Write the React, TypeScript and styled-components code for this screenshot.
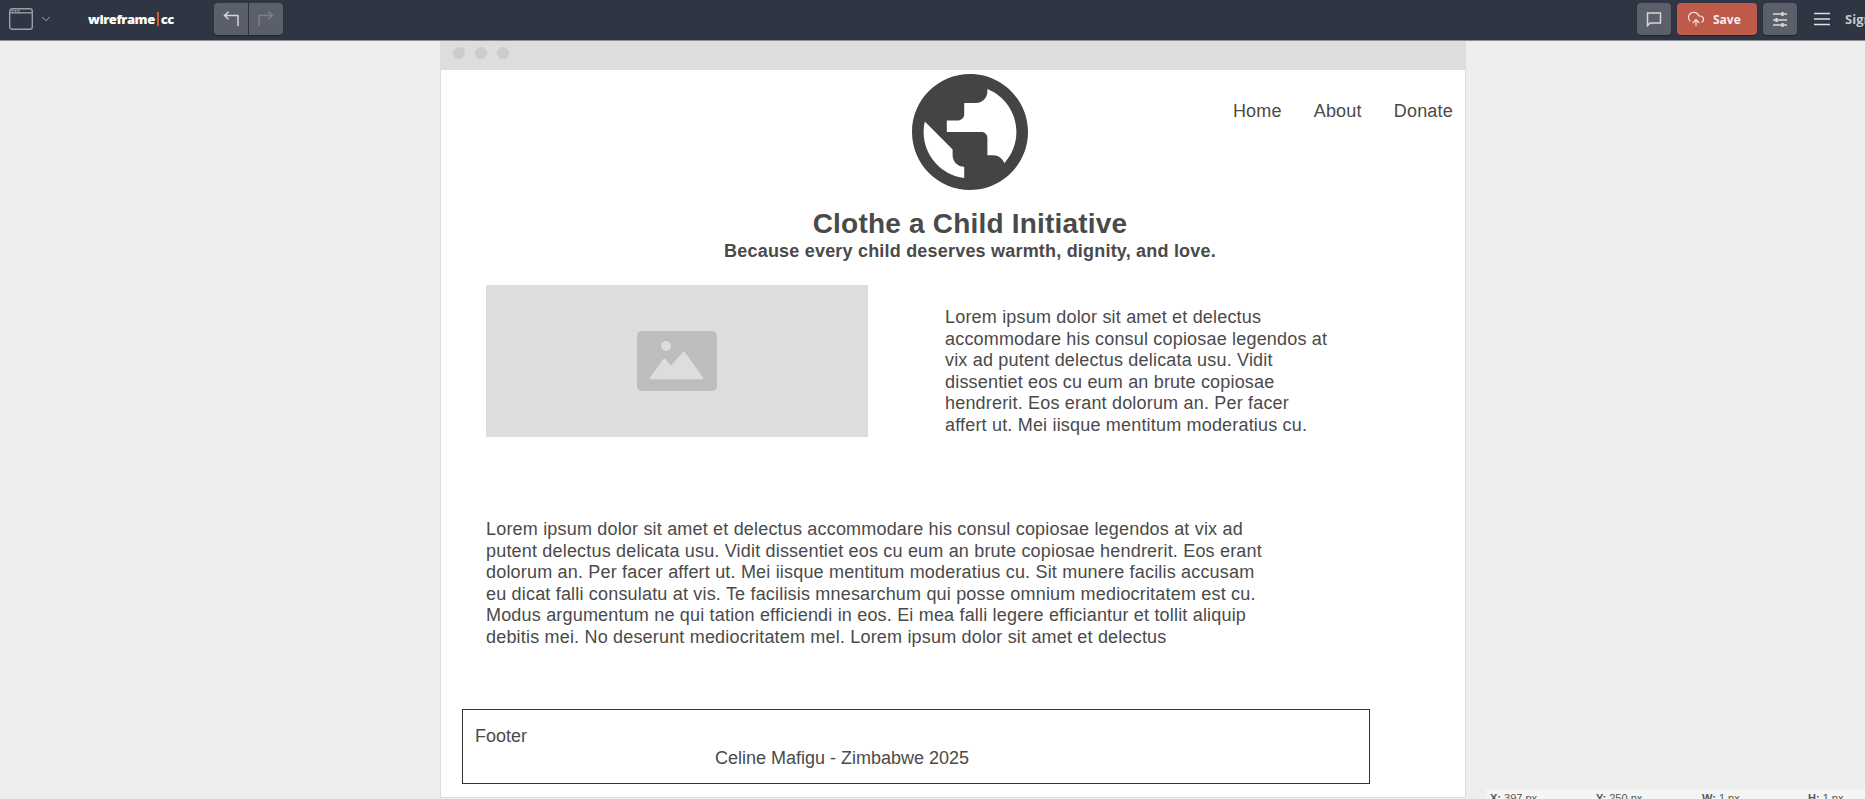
import { createGlobalStyle } from "styled-components";
import styled from "styled-components";
import { ChevronDown, CloudUpload } from "lucide-react";

const Global = createGlobalStyle`
  html, body {
    margin: 0;
    padding: 0;
    height: 100%;
    overflow: hidden;
  }
  #root {
    height: 100%;
  }
`;

const Page = styled.div`
  position: relative;
  height: 799px;
  overflow: hidden;
  background: #eeeeee;
  font-family: "Liberation Sans", Arial, sans-serif;
  color: #4a4a4a;
`;

const Toolbar = styled.div`
  display: flex;
  align-items: center;
  height: 38px;
  padding: 0 0 2px 9px;
  background: #2f3542;
  border-bottom: 1px solid #8a8d93;
`;

const WindowIcon = styled.svg`
  width: 24px;
  height: 22px;
  flex: none;
`;

const Chevron = styled(ChevronDown)`
  margin-left: 6px;
  color: #b5b9bf;
  flex: none;
`;

const Brand = styled.div`
  margin-left: 35px;
  width: 126px;
  font-family: "Open Sans", "Noto Sans", sans-serif;
  font-size: 13px;
  font-weight: 800;
  color: #ffffff;
  letter-spacing: -0.45px;

  i {
    display: inline-block;
    width: 2px;
    height: 14px;
    margin: 0 2px;
    background: #d0583f;
    vertical-align: -2px;
  }
`;

const ButtonGroup = styled.div`
  display: flex;
  gap: 1px;
`;

const ToolButton = styled.div<{ $side?: "left" | "right"; $dim?: boolean }>`
  display: flex;
  align-items: center;
  justify-content: center;
  width: 34px;
  height: 32px;
  background: #5a5f69;
  color: ${(p) => (p.$dim ? "#7c818a" : "#d5d7da")};
  border-radius: ${(p) =>
    p.$side === "left"
      ? "4px 0 0 4px"
      : p.$side === "right"
        ? "0 4px 4px 0"
        : "4px"};
  box-shadow: 0 1px 1px rgba(0, 0, 0, 0.3);
`;

const ToolIcon = styled.svg`
  width: 16px;
  height: 16px;
  fill: none;
  stroke: currentColor;
  stroke-width: 1.5;
`;

const Spacer = styled.div`
  flex: 1;
`;

const SaveButton = styled.div`
  display: flex;
  align-items: center;
  gap: 8px;
  width: 80px;
  height: 32px;
  box-sizing: border-box;
  margin: 0 6px;
  padding-left: 10px;
  background: #bd5a4a;
  border-radius: 4px;
  box-shadow: 0 1px 1px rgba(0, 0, 0, 0.3);
  color: #f3f0ee;
  font-family: "Open Sans", "Noto Sans", sans-serif;
  font-size: 12px;
  font-weight: 700;
`;

const MenuIcon = styled.svg`
  width: 16px;
  height: 14px;
  margin-left: 17px;
  flex: none;
  stroke: #dfe0e3;
  stroke-width: 1.5;
`;

const SignIn = styled.div`
  width: 20px;
  margin-left: 15px;
  overflow: hidden;
  white-space: nowrap;
  font-family: "Open Sans", "Noto Sans", sans-serif;
  font-size: 13px;
  font-weight: 700;
  color: #c5c7cb;
`;

const Artboard = styled.div`
  width: 1026px;
  height: 757px;
  box-sizing: border-box;
  margin-left: 440px;
  background: #ffffff;
  border: 1px solid #dddddd;
  border-top: 0;
`;

const TitleBar = styled.div`
  display: flex;
  align-items: center;
  gap: 10px;
  height: 29px;
  margin: 0 -1px;
  padding: 0 0 5px 13px;
  box-sizing: border-box;
  background: #dddddd;
`;

const Dot = styled.span`
  width: 12px;
  height: 12px;
  border-radius: 50%;
  background: #cccccc;
`;

const Header = styled.div`
  display: flex;
  align-items: flex-start;
  padding: 4px 12px 0 471px;
`;

const Globe = styled.svg`
  width: 116px;
  height: 116px;
  fill: #444444;
  flex: none;
`;

const Nav = styled.nav`
  display: flex;
  gap: 32px;
  margin-left: auto;
  padding-top: 26px;
  font-size: 18px;
  line-height: 22px;
  letter-spacing: 0.2px;
`;

const Titles = styled.div`
  padding-left: 34px;
  text-align: center;
  letter-spacing: 0.2px;
`;

const Title = styled.h1`
  margin: 17px 0 0;
  font-size: 28px;
  line-height: 34px;
  font-weight: 700;
  letter-spacing: 0.2px;
`;

const Subtitle = styled.h2`
  margin: 0;
  font-size: 18px;
  line-height: 21px;
  font-weight: 700;
`;

const MediaRow = styled.div`
  display: flex;
  align-items: flex-start;
  gap: 77px;
  margin-top: 23px;
  padding-left: 45px;
`;

const ImageBox = styled.div`
  display: flex;
  align-items: center;
  justify-content: center;
  width: 382px;
  height: 152px;
  flex: none;
  background: #dddddd;
`;

const ImageGlyph = styled.svg`
  width: 80px;
  height: 60px;
`;

const Copy = styled.p<{ $width: number; $top: number }>`
  width: ${(p) => p.$width}px;
  margin: ${(p) => p.$top}px 0 0;
  font-size: 18px;
  line-height: 21.6px;
  letter-spacing: 0.185px;
`;

const BodyText = styled.div`
  padding-left: 45px;
`;

const Footer = styled.div`
  width: 908px;
  height: 75px;
  box-sizing: border-box;
  margin: 60px 0 0 21px;
  padding: 15px 12px 0;
  border: 1px solid #333333;
  font-size: 18px;
  line-height: 22px;
`;

const FooterCredit = styled.div`
  padding-left: 240px;
`;

const StatusBar = styled.div`
  position: absolute;
  left: 1486px;
  top: 789px;
  display: grid;
  grid-template-columns: repeat(4, 106px);
  width: 379px;
  height: 30px;
  padding: 3px 0 0 4px;
  box-sizing: border-box;
  background: #f5f5f5;
  font-size: 11px;
  color: #555555;

  b {
    font-weight: 700;
  }
`;

export default function App() {
  return (
    <>
      <Global />
      <Page>
        <Toolbar>
          <WindowIcon viewBox="0 0 24 22" fill="none">
            <rect x="0.7" y="0.7" width="22.6" height="20.6" rx="2.5" stroke="#9aa0a8" strokeWidth="1.4" />
            <path d="M1 4.8h22" stroke="#9aa0a8" strokeWidth="1.4" />
            <path d="M2.500 2.800h2M5.500 2.800h2M8.500 2.800h2" stroke="#9aa0a8" strokeWidth="1.4" />
          </WindowIcon>
          <Chevron size={14} strokeWidth={1.5} />
          <Brand>
            wireframe<i />cc
          </Brand>
          <ButtonGroup>
            <ToolButton $side="left">
              <ToolIcon viewBox="0 0 16 16">
                <path d="M15 15V4.500H1.500M5.500.700L1.500 4.500l4 3.800" />
              </ToolIcon>
            </ToolButton>
            <ToolButton $side="right" $dim>
              <ToolIcon viewBox="0 0 16 16">
                <path d="M1 15V4.500h13.500M10.500.700l4 3.800-4 3.800" />
              </ToolIcon>
            </ToolButton>
          </ButtonGroup>
          <Spacer />
          <ToolButton>
            <ToolIcon viewBox="0 0 16 16">
              <path d="M1.500 2h13v10H4.200L1.500 14.500z" />
            </ToolIcon>
          </ToolButton>
          <SaveButton>
            <CloudUpload size={18} strokeWidth={1.5} />
            Save
          </SaveButton>
          <ToolButton>
            <ToolIcon viewBox="0 0 16 16">
              <path d="M1 3h14M1 9h14M1 14h14" />
              <path d="M10.500 1v4M4.500 7v4M10.500 12v4" strokeWidth="2.200" />
            </ToolIcon>
          </ToolButton>
          <MenuIcon viewBox="0 0 16 14">
            <path d="M0 1.500h16M0 7h16M0 12.500h16" />
          </MenuIcon>
          <SignIn>Sign in</SignIn>
        </Toolbar>

        <Artboard>
          <TitleBar>
            <Dot />
            <Dot />
            <Dot />
          </TitleBar>
          <Header>
            <Globe viewBox="2 2 20 20">
              <path d="M12 2C6.48 2 2 6.48 2 12s4.48 10 10 10 10-4.48 10-10S17.52 2 12 2zm-1 17.93c-3.95-.49-7-3.85-7-7.93 0-.62.08-1.21.21-1.79L9 15v1c0 1.1.9 2 2 2v1.93zm6.9-2.54c-.26-.81-1-1.39-1.9-1.39h-1v-3c0-.55-.45-1-1-1H8v-2h2c.55 0 1-.45 1-1V7h2c1.1 0 2-.9 2-2v-.41c2.93 1.19 5 4.06 5 7.41 0 2.08-.8 3.97-2.1 5.39z" />
            </Globe>
            <Nav>
              <span>Home</span>
              <span>About</span>
              <span>Donate</span>
            </Nav>
          </Header>
          <Titles>
            <Title>Clothe a Child Initiative</Title>
            <Subtitle>Because every child deserves warmth, dignity, and love.</Subtitle>
          </Titles>
          <MediaRow>
            <ImageBox>
              <ImageGlyph viewBox="0 0 80 60">
                <rect width="80" height="60" rx="5" fill="#bdbdbd" />
                <circle cx="29" cy="15" r="5" fill="#dddddd" />
                <path
                  d="M13 46.500L26 28.500c.8-1 1.800-1 2.600 0L34 34.500l11.500-13c.8-1 1.800-1 2.600 0L66 46.500c.6 1 .2 1.800-1 1.800H14c-1.200 0-1.600-.8-1-1.800z"
                  fill="#dddddd"
                />
              </ImageGlyph>
            </ImageBox>
            <Copy $width={385} $top={22}>
              Lorem ipsum dolor sit amet et delectus accommodare his consul copiosae legendos at vix ad
              putent delectus delicata usu. Vidit dissentiet eos cu eum an brute copiosae hendrerit. Eos
              erant dolorum an. Per facer affert ut. Mei iisque mentitum moderatius cu.
            </Copy>
          </MediaRow>
          <BodyText>
            <Copy $width={780} $top={82}>
              Lorem ipsum dolor sit amet et delectus accommodare his consul copiosae legendos at vix ad
              putent delectus delicata usu. Vidit dissentiet eos cu eum an brute copiosae hendrerit. Eos
              erant dolorum an. Per facer affert ut. Mei iisque mentitum moderatius cu. Sit munere facilis
              accusam eu dicat falli consulatu at vis. Te facilisis mnesarchum qui posse omnium
              mediocritatem est cu. Modus argumentum ne qui tation efficiendi in eos. Ei mea falli legere
              efficiantur et tollit aliquip debitis mei. No deserunt mediocritatem mel. Lorem ipsum dolor
              sit amet et delectus
            </Copy>
          </BodyText>
          <Footer>
            <div>Footer</div>
            <FooterCredit>Celine Mafigu - Zimbabwe 2025</FooterCredit>
          </Footer>
        </Artboard>

        <StatusBar>
          <span><b>X:</b> 397 px</span>
          <span><b>Y:</b> 250 px</span>
          <span><b>W:</b> 1 px</span>
          <span><b>H:</b> 1 px</span>
        </StatusBar>
      </Page>
    </>
  );
}
